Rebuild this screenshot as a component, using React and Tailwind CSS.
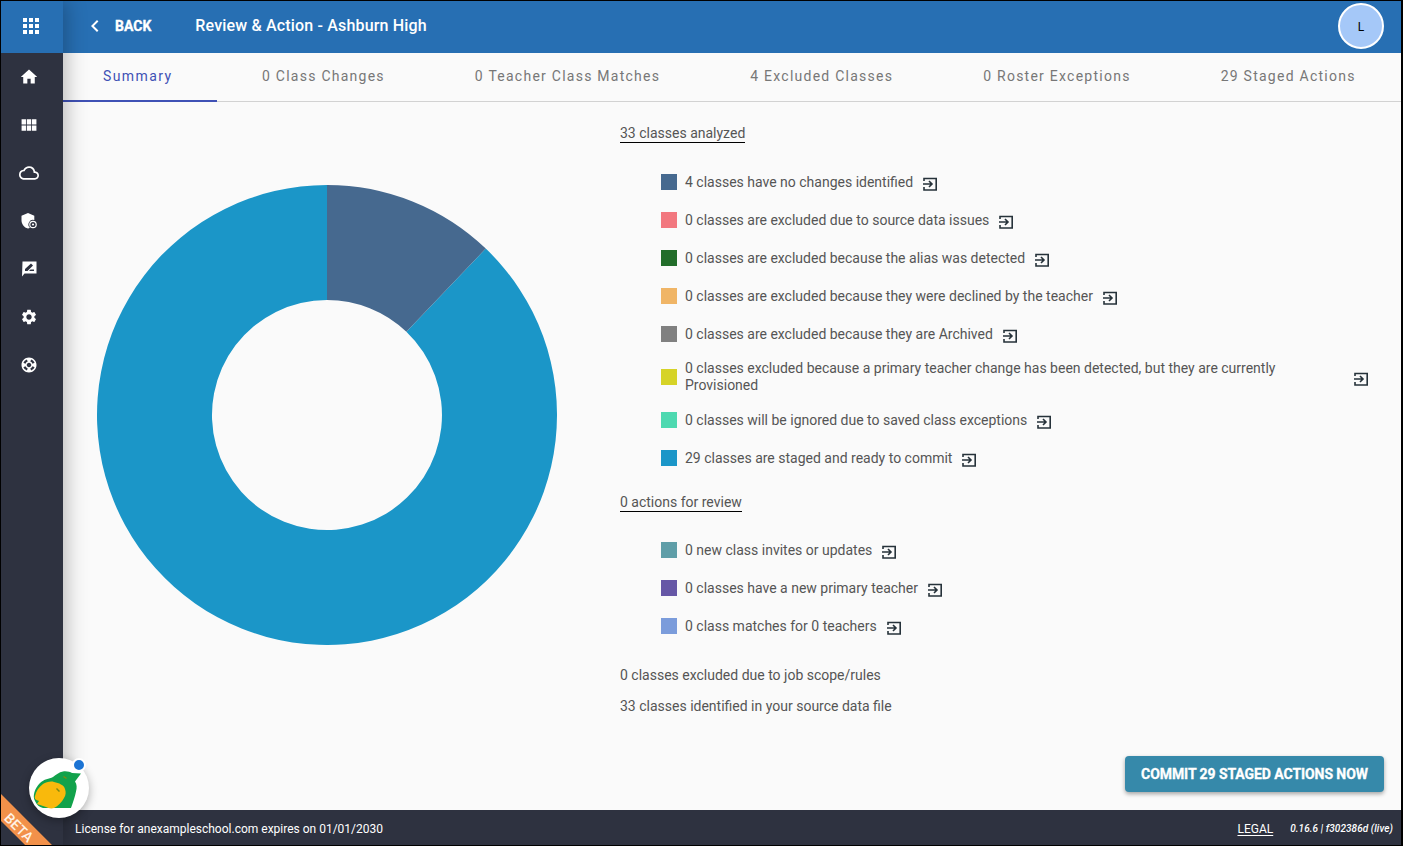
import React from 'react';
import { MdHome, MdViewModule, MdCloudQueue, MdSettings, MdApps, MdChevronLeft, MdSupport } from 'react-icons/md';

const tabs = ['Summary', '0 Class Changes', '0 Teacher Class Matches', '4 Excluded Classes', '0 Roster Exceptions', '29 Staged Actions'];

const analyzed = [
  { color: 'bg-[#46698f]', text: '4 classes have no changes identified' },
  { color: 'bg-[#f2777f]', text: '0 classes are excluded due to source data issues' },
  { color: 'bg-[#226d2a]', text: '0 classes are excluded because the alias was detected' },
  { color: 'bg-[#f0b566]', text: '0 classes are excluded because they were declined by the teacher' },
  { color: 'bg-[#808080]', text: '0 classes are excluded because they are Archived' },
  { color: 'bg-[#d6d327]', text: '0 classes excluded because a primary teacher change has been detected, but they are currently Provisioned', wide: true },
  { color: 'bg-[#4dd9b0]', text: '0 classes will be ignored due to saved class exceptions' },
  { color: 'bg-[#1b96c8]', text: '29 classes are staged and ready to commit' },
];

const review = [
  { color: 'bg-[#5f9ea8]', text: '0 new class invites or updates' },
  { color: 'bg-[#6657a6]', text: '0 classes have a new primary teacher' },
  { color: 'bg-[#7b9cdb]', text: '0 class matches for 0 teachers' },
];

const ShieldIcon = () => (
  <svg viewBox="0 0 18 18" className="w-[18px] h-[18px]" fill="#fff">
    <path d="M8 1 1.500 3.700v4.500c0 3.900 2.700 7.300 6.500 8.300.7-.2 1.300-.4 1.900-.8a4.500 4.500 0 0 1 4.400-7.600V3.700z" />
    <circle cx="13" cy="12.500" r="3.200" fill="none" stroke="#fff" strokeWidth="1.200" />
    <circle cx="13" cy="12.500" r="1.100" />
  </svg>
);

const ReviewIcon = () => (
  <svg viewBox="0 0 18 18" className="w-[18px] h-[18px]" fill="#fff">
    <path fillRule="evenodd" d="M2.500 1.500h14v12h-12l-2.500 3zM5 11h2.500l5.500-5.500-2-2L5 9zM9 11h5V9.500h-3.500z" />
  </svg>
);

const JumpIcon = () => (
  <svg viewBox="0 0 16 16" className="w-4 h-4 shrink-0" fill="none" stroke="#26323a" strokeWidth="1.600">
    <path d="M2 5V2.500h12.200v11.500H2V11" />
    <path d="M1 8h8.500M7 5l3 3-3 3" />
  </svg>
);

const Donut = () => (
  <svg viewBox="0 0 460 460" className="w-[460px] h-[460px]">
    <path d="M388.750 63.570A230 230 0 1 1 230 0v115a115 115 0 1 0 79.370 31.800z" fill="#1b96c8" />
    <path d="M230 0A230 230 0 0 1 388.750 63.570L309.370 146.800A115 115 0 0 0 230 115z" fill="#46698f" />
  </svg>
);

const Bird = () => (
  <svg viewBox="0 0 60 60" className="absolute inset-0 w-[60px] h-[60px]">
    <path d="M6 43C3 38 6 30 11 25c4-4 9-4 13-6 3-2 6-5 10-5.500 4-.5 7 .5 9 1.500l9 .5-6 8c2 3 2 6 1 10-1 5-3 11-5 16.500L14 50C10 49 8 47 6 43z" fill="#12a24b" />
    <path d="M8 46l2-3c-3-1-5-2-4-5 1-5 4-9 8-12 3-2 8-3 11-2 5 1 10 3 11 7 1 3 1 6-1 9-2 4-6 8-10 10-3 1-6 0-8-1-3-1-6-2-9-3z" fill="#f9b90c" />
    <path d="M34 19l3 2 1-1-3-2zM27 31l3 3 1-1-3-3z" fill="#7d8a12" />
  </svg>
);

const RowList = ({ rows }) => (
  <div className="flex flex-col pl-[41px]">
    {rows.map((row) => (
      <div key={row.text} className={`flex items-center ${row.wide ? 'h-[48px] w-[708px]' : 'h-[38px]'}`}>
        <span className={`w-4 h-4 shrink-0 mr-2 ${row.color}`} />
        <span className={row.wide ? 'w-[611px] mr-auto leading-[17px]' : ''}>{row.text}</span>
        <span className={`translate-y-[2px] ${row.wide ? '' : 'ml-[9px]'}`}>
          <JumpIcon />
        </span>
      </div>
    ))}
  </div>
);

export default function App() {
  return (
    <div className="w-[1403px] h-[846px] flex border border-black border-r-2 bg-[#fafafa] overflow-hidden text-[14px] leading-[16px] text-[#555] font-['Roboto',sans-serif]">
      {/* Sidebar */}
      <aside className="relative w-[62px] shrink-0 bg-[#2e3240] flex flex-col items-center z-10 shadow-[4px_0_20px_rgba(0,0,0,0.25)]">
        <div className="w-full h-[52px] shrink-0 bg-[#276fb3] flex items-center justify-center text-white pr-[2px] pb-[2px]">
          <MdApps className="w-6 h-6" />
        </div>
        <nav className="flex flex-col items-center gap-[24px] pt-[12px] pr-[6px] text-white">
          <MdHome className="w-[18px] h-[24px] scale-[1.1]" />
          <MdViewModule className="w-[18px] h-[24px] scale-[1.1]" />
          <MdCloudQueue className="w-[20px] h-[24px]" />
          <span className="h-[24px] flex items-center"><ShieldIcon /></span>
          <span className="h-[24px] flex items-center"><ReviewIcon /></span>
          <MdSettings className="w-[18px] h-[24px]" />
          <MdSupport className="w-[18px] h-[24px]" />
        </nav>

        {/* Mascot button */}
        <div className="absolute left-[28px] top-[757px] w-[60px] h-[60px] rounded-full bg-white shadow-[0_3px_10px_rgba(0,0,0,0.3)]">
          <Bird />
          <span className="absolute right-[3px] top-0 w-[10px] h-[10px] rounded-full bg-[#1c74d4] border-2 border-white box-content" />
        </div>

        {/* Beta ribbon */}
        <div className="absolute left-[-26px] top-[816px] w-[90px] h-[19px] pt-[3px] bg-[#f2914a] text-[#fff3e6] text-[14px] leading-[16px] text-center rotate-45 font-medium">
          BETA
        </div>
      </aside>

      <div className="flex-1 min-w-0 flex flex-col">
        {/* Top bar */}
        <header className="h-[52px] shrink-0 bg-[#276fb3] flex items-center text-white pl-[20px] pr-[17px] pb-[2px]">
          <MdChevronLeft className="w-[24px] h-[24px]" />
          <span className="ml-[8px] text-[14px] font-bold [-webkit-text-stroke:0.3px_white]">BACK</span>
          <h1 className="ml-[44px] text-[16px] font-medium tracking-[0.17px]">Review &amp; Action - Ashburn High</h1>
          <div className="ml-auto w-[46px] h-[46px] rounded-full bg-[#a5c8f8] border-2 border-white flex items-center justify-center text-[12px] text-black pt-[2px]">
            L
          </div>
        </header>

        {/* Tabs */}
        <div className="h-[49px] shrink-0 flex border-b border-[#d2d2d2]">
          {tabs.map((tab, i) => (
            <div
              key={tab}
              className={`h-[49px] shrink-0 whitespace-nowrap flex items-center pb-[2px] border-b-2 ${i === 0 ? 'w-[154px] pl-[40px] tracking-[1.4px] text-[#3f51b5] border-[#3f51b5]' : 'px-[45px] tracking-[1.25px] text-[#777] border-transparent'}`}
            >
              {tab}
            </div>
          ))}
        </div>

        {/* Content */}
        <main className="flex-1 min-h-0 flex">
          <div className="w-[557px] shrink-0 pl-[34px] pt-[83px]">
            <Donut />
          </div>
          <div className="flex-1 min-w-0 pt-[23px] flex flex-col items-start">
            <div className="border-b border-black pb-[1px] mb-[20px]">33 classes analyzed</div>
            <RowList rows={analyzed} />
            <div className="mt-[17px] mb-[19px] border-b border-black pb-[1px]">0 actions for review</div>
            <RowList rows={review} />
            <p className="mt-[22px]">0 classes excluded due to job scope/rules</p>
            <p className="mt-[15px]">33 classes identified in your source data file</p>
            <button className="mt-auto self-end mr-[17px] mb-[18px] w-[259px] h-9 rounded bg-[#3689aa] shadow-[0_2px_4px_rgba(0,0,0,0.35)] flex items-center justify-center text-white font-bold tracking-[-0.07px] [-webkit-text-stroke:0.3px_white]">
              COMMIT 29 STAGED ACTIONS NOW
            </button>
          </div>
        </main>

        {/* Footer */}
        <footer className="h-[35px] shrink-0 bg-[#2e3240] flex items-center text-white text-[12px] pl-[12px] pr-[8px] pt-[2px]">
          <span>License for anexampleschool.com expires on 01/01/2030</span>
          <span className="ml-auto underline underline-offset-2">LEGAL</span>
          <span className="ml-[17px] text-[10px] italic font-medium tracking-[0.08px]">0.16.6 | f302386d (live)</span>
        </footer>
      </div>
    </div>
  );
}
